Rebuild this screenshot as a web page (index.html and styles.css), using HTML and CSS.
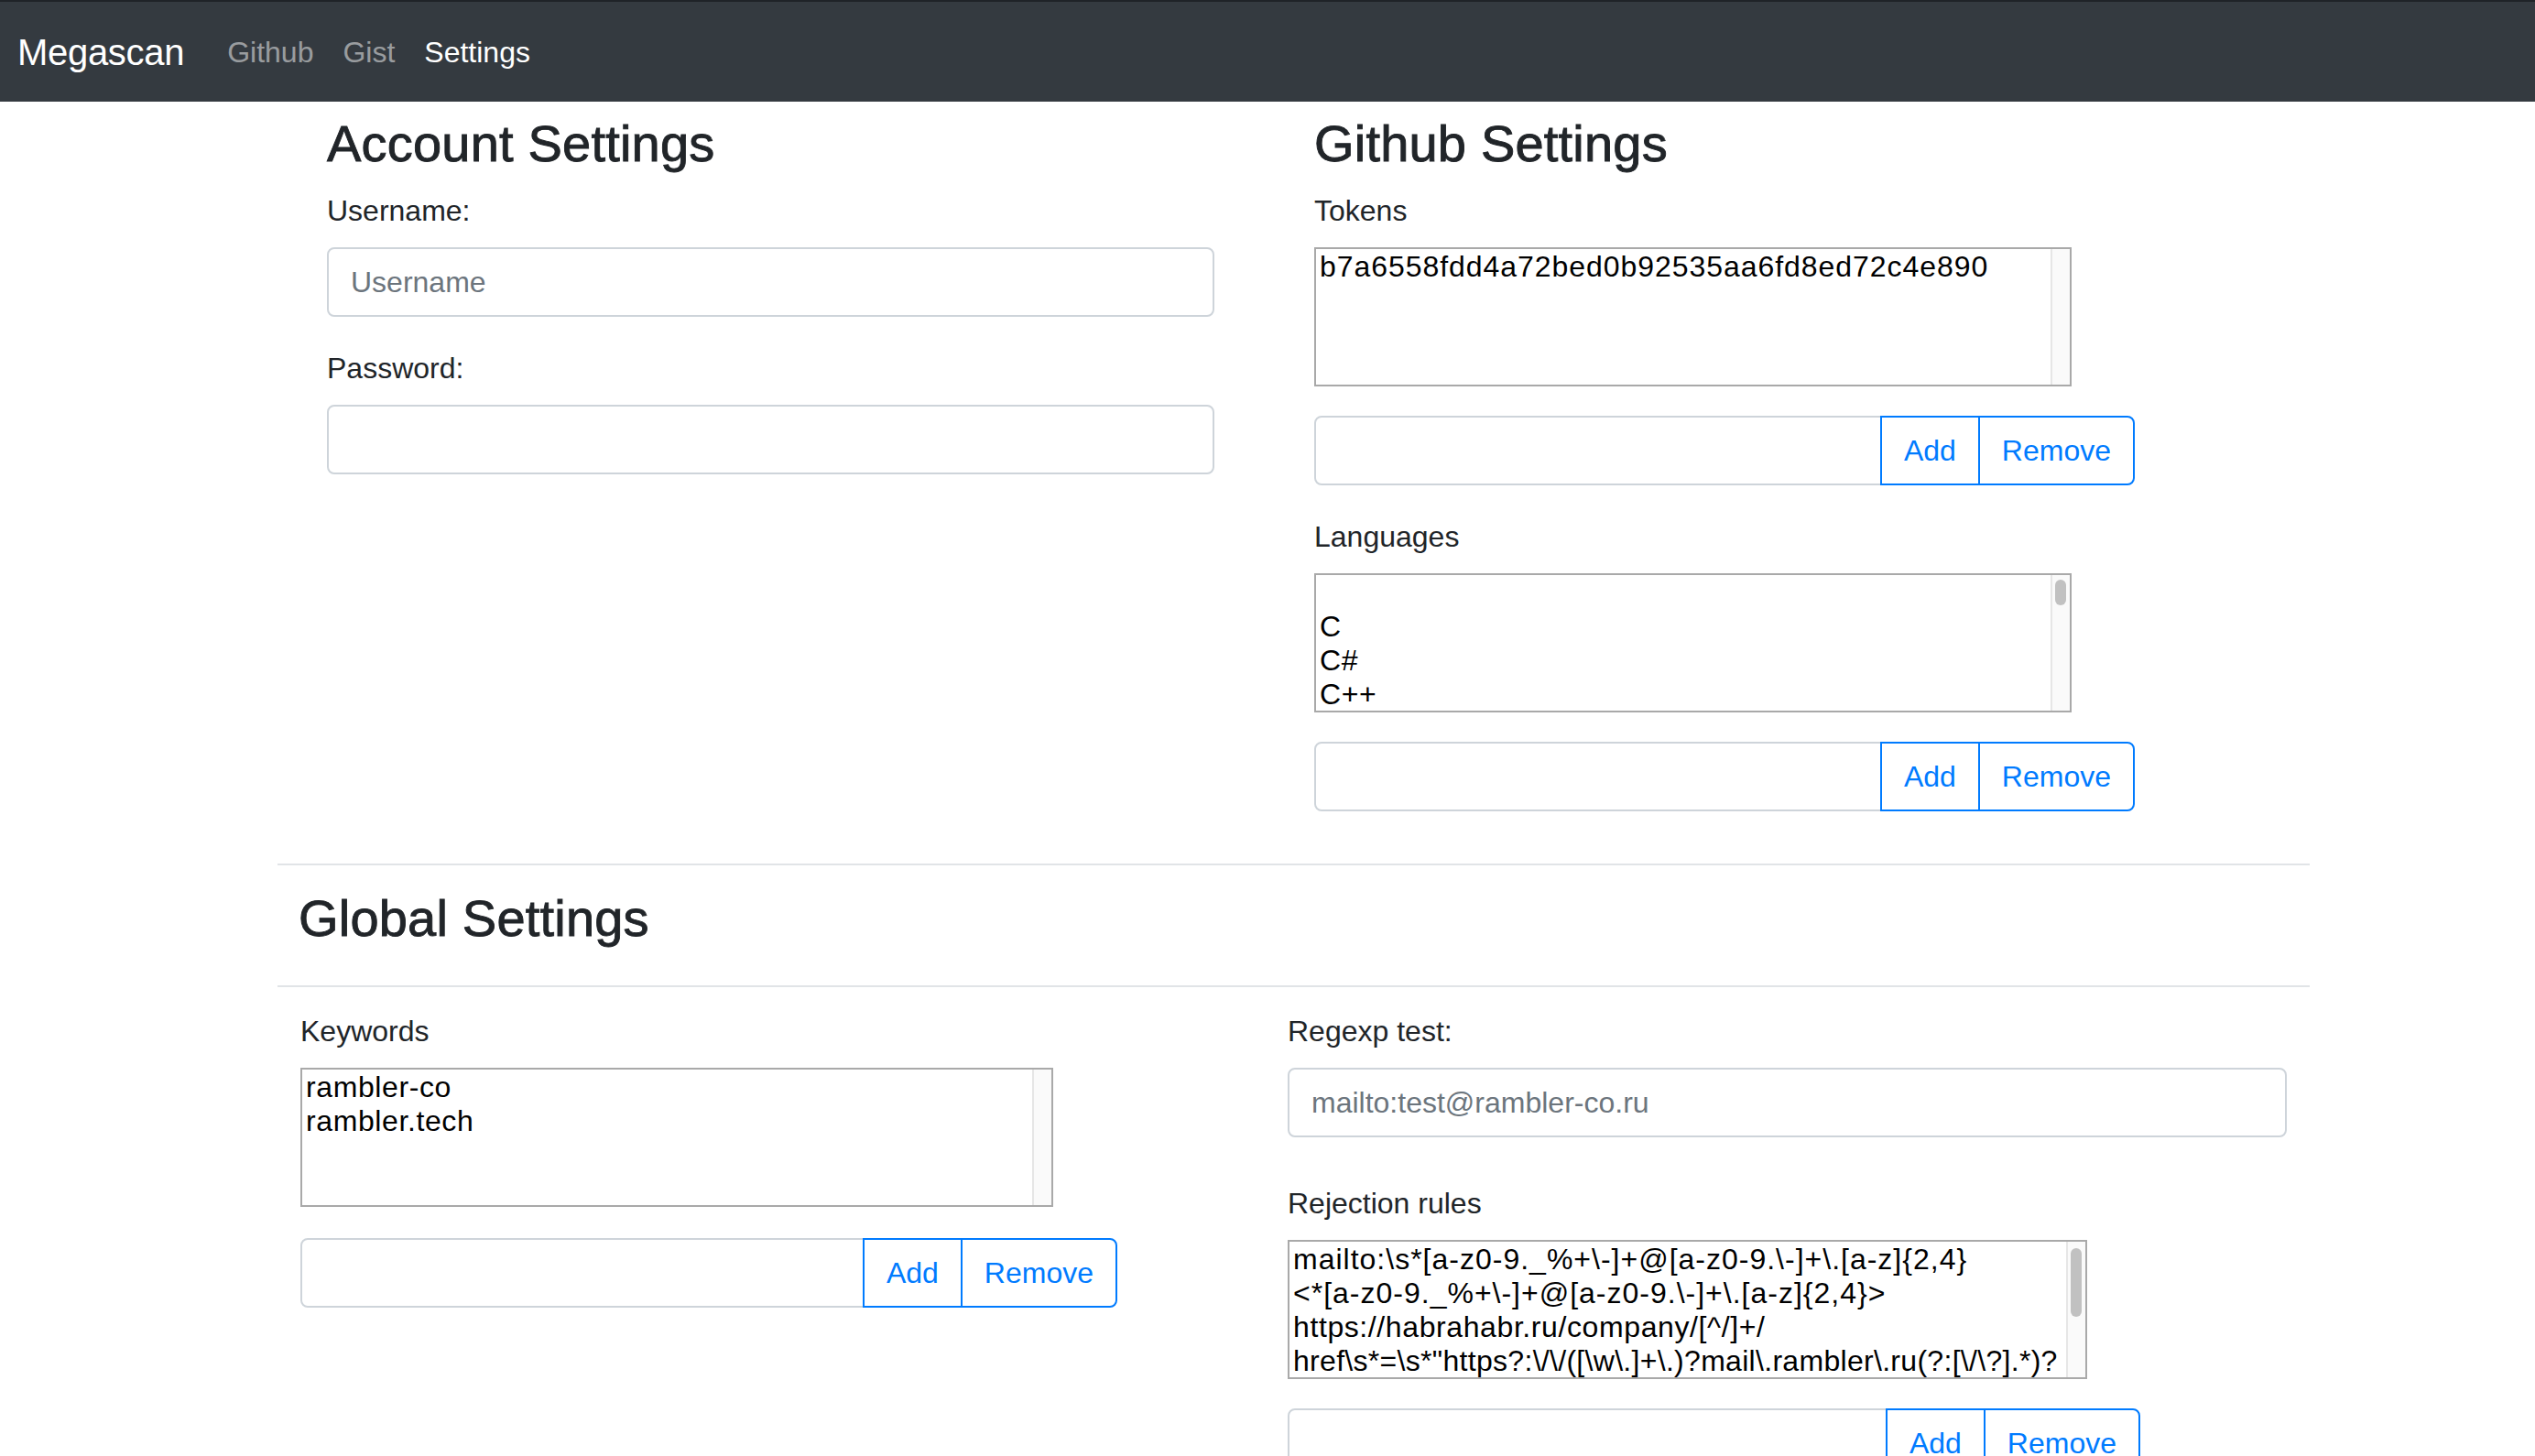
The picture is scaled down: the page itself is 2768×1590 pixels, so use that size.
FILE: index.html
```html
<!DOCTYPE html>
<html lang="en">
<head>
<meta charset="utf-8">
<title>Megascan - Settings</title>
<link rel="stylesheet" href="styles.css">
</head>
<body>
<nav class="navbar">
  <a class="brand" href="#">Megascan</a>
  <ul class="nav">
    <li><a class="nav-link" href="#">Github</a></li>
    <li><a class="nav-link" href="#">Gist</a></li>
    <li><a class="nav-link active" href="#">Settings</a></li>
  </ul>
</nav>

<main class="page">
  <section class="top-row">
    <div class="col account">
      <h3 class="title">Account Settings</h3>
      <div class="form-group">
        <label class="label">Username:</label>
        <input class="form-control wide" type="text" placeholder="Username">
      </div>
      <div class="form-group">
        <label class="label">Password:</label>
        <input class="form-control wide" type="password">
      </div>
    </div>

    <div class="col github">
      <h3 class="title">Github Settings</h3>
      <div class="form-group">
        <label class="label">Tokens</label>
        <div class="listbox lb-gh">
          <div class="list-items">
            <div class="opt opt-token">b7a6558fdd4a72bed0b92535aa6fd8ed72c4e890</div>
          </div>
          <div class="track"></div>
        </div>
        <div class="input-group ig-gh">
          <input class="form-control" type="text">
          <button class="btn">Add</button>
          <button class="btn">Remove</button>
        </div>
      </div>
      <div class="form-group">
        <label class="label">Languages</label>
        <div class="listbox lb-gh">
          <div class="list-items">
            <div class="opt"></div>
            <div class="opt">C</div>
            <div class="opt">C#</div>
            <div class="opt">C++</div>
          </div>
          <div class="track"><div class="thumb thumb-lang"></div></div>
        </div>
        <div class="input-group ig-gh">
          <input class="form-control" type="text">
          <button class="btn">Add</button>
          <button class="btn">Remove</button>
        </div>
      </div>
    </div>
  </section>

  <hr class="divider divider-first">
  <h3 class="title global-title">Global Settings</h3>
  <hr class="divider divider-second">

  <section class="global-row">
    <div class="col keywords">
      <label class="label">Keywords</label>
      <div class="listbox lb-kw">
        <div class="list-items">
          <div class="opt">rambler-co</div>
          <div class="opt">rambler.tech</div>
        </div>
        <div class="track"></div>
      </div>
      <div class="input-group ig-kw">
        <input class="form-control" type="text">
        <button class="btn">Add</button>
        <button class="btn">Remove</button>
      </div>
    </div>

    <div class="col regexp">
      <label class="label">Regexp test:</label>
      <input class="form-control regexp-input" type="text" placeholder="mailto:test@rambler-co.ru">
      <label class="label">Rejection rules</label>
      <div class="listbox lb-rr">
        <div class="list-items">
          <div class="opt opt-wide">mailto:\s*[a-z0-9._%+\-]+@[a-z0-9.\-]+\.[a-z]{2,4}</div>
          <div class="opt opt-wide">&lt;*[a-z0-9._%+\-]+@[a-z0-9.\-]+\.[a-z]{2,4}&gt;</div>
          <div class="opt">https://habrahabr.ru/company/[^/]+/</div>
          <div class="opt opt-tight">href\s*=\s*"https?:\/\/([\w\.]+\.)?mail\.rambler\.ru(?:[\/\?].*)?</div>
        </div>
        <div class="track"><div class="thumb thumb-rr"></div></div>
      </div>
      <div class="input-group ig-rr">
        <input class="form-control" type="text">
        <button class="btn">Add</button>
        <button class="btn">Remove</button>
      </div>
    </div>
  </section>
</main>
</body>
</html>
```

FILE: styles.css
```css
* { box-sizing: border-box; }

html, body {
  margin: 0;
  padding: 0;
  background: #fff;
}

body {
  font-family: "Liberation Sans", Arial, Helvetica, sans-serif;
  font-size: 32px;
  line-height: 48px;
  color: #212529;
}

/* ---------- navbar ---------- */
.navbar {
  display: flex;
  align-items: center;
  height: 111px;
  padding-left: 19px;
  background: #343a40;
  border-top: 2px solid #1f2328;
}

.brand {
  font-size: 40px;
  line-height: 60px;
  color: #fff;
  text-decoration: none;
  margin-right: 31px;
  letter-spacing: -0.3px;
}

.nav {
  display: flex;
  list-style: none;
  margin: 0;
  padding: 0;
}

.nav-link {
  display: block;
  padding: 0 16px;
  line-height: 48px;
  color: rgba(255, 255, 255, 0.5);
  text-decoration: none;
}

.nav-link.active { color: #fff; }

/* ---------- common ---------- */
.title {
  margin: 0 0 16px;
  font-size: 56px;
  line-height: 67px;
  font-weight: normal;
  -webkit-text-stroke: 0.9px #212529;
  letter-spacing: 0.2px;
  color: #212529;
}

.label {
  display: block;
  margin-bottom: 16px;
}

.form-group { margin-bottom: 32px; }

.form-control {
  display: block;
  height: 76px;
  padding: 12px 24px;
  font-family: inherit;
  font-size: 32px;
  line-height: 48px;
  color: #495057;
  background: #fff;
  border: 2px solid #ced4da;
  border-radius: 8px;
  outline: none;
}

.form-control::placeholder { color: #6c757d; opacity: 1; }

.wide { width: 969px; }

/* ---------- list boxes ---------- */
.listbox {
  display: flex;
  height: 152px;
  border: 2px solid #a9a9a9;
  background: #fff;
  margin-bottom: 32px;
}

.list-items {
  flex: 1;
  min-width: 0;
  overflow: hidden;
  padding: 1px 0 0 4px;
  font-size: 32px;
  line-height: 37px;
  letter-spacing: 0.6px;
  color: #000;
}

.opt {
  height: 37px;
  white-space: nowrap;
}

.opt-token { letter-spacing: 0.95px; }
.opt-wide { letter-spacing: 1px; }
.opt-tight { letter-spacing: 0.3px; }

.track {
  flex: none;
  width: 21px;
  background: #fafafa;
  border-left: 2px solid #e6e6e6;
  padding-left: 3px;
}

.thumb {
  width: 12px;
  border-radius: 6px;
  background: #c1c1c1;
}

.thumb-lang { margin-top: 5px; height: 28px; }
.thumb-rr { margin-top: 7px; height: 75px; }

.lb-gh { width: 827px; }
.lb-kw { width: 822px; margin-bottom: 34px; }
.lb-rr { width: 873px; }

/* ---------- input group ---------- */
.input-group {
  display: flex;
  height: 76px;
}

.input-group .form-control {
  flex: 1;
  min-width: 0;
  height: 76px;
  border-radius: 8px 0 0 8px;
}

.btn {
  flex: none;
  margin-left: -2px;
  padding: 0 24px;
  font-family: inherit;
  font-size: 32px;
  line-height: 48px;
  color: #007bff;
  background: transparent;
  border: 2px solid #007bff;
  border-radius: 0;
  position: relative;
}

.btn:last-child { border-radius: 0 8px 8px 0; }

.ig-gh { width: 896px; }
.ig-kw { width: 892px; }
.ig-rr { width: 931px; }

/* ---------- layout ---------- */
.top-row {
  display: flex;
  padding: 12px 0 0 357px;
}

.col { flex: none; }
.account { width: 1078px; }
.github { width: 1000px; }

.divider {
  height: 0;
  width: 2219px;
  margin: 0 0 0 303px;
  border: 0;
  border-top: 2px solid #e1e4e7;
}

.divider-first { margin-top: 25px; }
.divider-second { margin-top: 40px; }

.global-title {
  margin: 24px 0 0 326px;
}

.global-row {
  display: flex;
  padding: 24px 0 120px 328px;
}

.keywords { width: 1078px; }
.regexp { width: 1100px; }

.regexp-input {
  width: 1091px;
  margin-bottom: 48px;
}
```
